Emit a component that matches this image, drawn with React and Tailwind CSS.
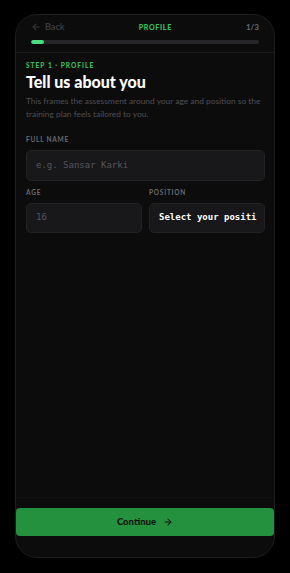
import React from "react";

export default function App() {
  return (
    <div className="w-[290px] h-[573px] bg-black pt-[14px] px-[15px]" style={{ fontFamily: "Lato, 'Noto Sans', sans-serif" }}>
      <div className="h-[544px] rounded-[22px] border border-[#1d1d1f] bg-[#0c0c0c] flex flex-col overflow-hidden">
        {/* Header */}
        <div className="px-[15px] pt-[7px] pb-[8px] border-b border-[#1c1c1e]">
          <div className="h-[10px] flex items-center justify-between">
            <div className="flex items-center gap-[4px] text-[#3a3a3e] text-[9px] font-bold">
              <svg width="10" height="10" viewBox="0 0 24 24" fill="none" stroke="currentColor" strokeWidth="2.5" strokeLinecap="round" strokeLinejoin="round">
                <path d="M19 12H5" />
                <path d="M12 19l-7-7 7-7" />
              </svg>
              <span>Back</span>
            </div>
            <div className="text-[#33c25a] text-[7px] font-black tracking-[0.1em]">PROFILE</div>
            <div className="text-right text-[#6b6b70] text-[8px] font-bold">1/3</div>
          </div>
          <div className="mt-[8px] h-[4px] rounded-full bg-[#26262a] overflow-hidden">
            <div className="h-full w-[13px] rounded-full bg-[#4ade80]" />
          </div>
        </div>

        {/* Content */}
        <div className="pl-[10px] pr-[9px] pt-[8px]">
          <div className="text-[#2fbf58] text-[6.5px] font-black tracking-[0.16em] leading-[9px]">STEP 1 · PROFILE</div>
          <h1 className="mt-[2px] text-white text-[16px] font-black leading-[20px]">Tell us about you</h1>
          <p className="mt-[3px] text-[#4f4f54] text-[8.4px] leading-[13px]">
            This frames the assessment around your age and position so the training plan feels tailored to you.
          </p>

          <div className="mt-[15px] text-[#6a6a70] text-[6.5px] font-bold tracking-[0.12em] leading-[8px]">FULL NAME</div>
          <div className="mt-[6px] h-[31px] rounded-[5px] border border-[#232326] bg-[#18181a] flex items-center px-[9px]">
            <span className="text-[#55555a] text-[9px]" style={{ fontFamily: "'DejaVu Sans Mono', monospace" }}>e.g. Sansar Karki</span>
          </div>

          <div className="mt-[8px] grid grid-cols-2 gap-[7px]">
            <div>
              <div className="text-[#6a6a70] text-[6.5px] font-bold tracking-[0.12em] leading-[8px]">AGE</div>
              <div className="mt-[6px] h-[30px] rounded-[5px] border border-[#232326] bg-[#18181a] flex items-center px-[9px]">
                <span className="text-[#55555a] text-[9px]" style={{ fontFamily: "'DejaVu Sans Mono', monospace" }}>16</span>
              </div>
            </div>
            <div>
              <div className="text-[#6a6a70] text-[6.5px] font-bold tracking-[0.12em] leading-[8px]">POSITION</div>
              <div className="mt-[6px] h-[30px] rounded-[5px] border border-[#232326] bg-[#18181a] flex items-center pl-[9px] pr-[8px] overflow-hidden">
                <span className="text-white text-[9px] font-bold whitespace-nowrap" style={{ fontFamily: "'DejaVu Sans Mono', monospace" }}>Select your positi</span>
              </div>
            </div>
          </div>
        </div>

        {/* Footer */}
        <div className="mt-auto border-t border-[#111113] pt-[10px] pb-[21px]">
          <button className="w-full h-[28px] rounded-[4px] bg-[#24913f] flex items-center justify-center gap-[7px] text-[#08140b] text-[9.5px] font-black">
            <span>Continue</span>
            <svg width="10" height="10" viewBox="0 0 24 24" fill="none" stroke="currentColor" strokeWidth="2.5" strokeLinecap="round" strokeLinejoin="round">
              <path d="M5 12h14" />
              <path d="M12 5l7 7-7 7" />
            </svg>
          </button>
        </div>
      </div>
    </div>
  );
}
